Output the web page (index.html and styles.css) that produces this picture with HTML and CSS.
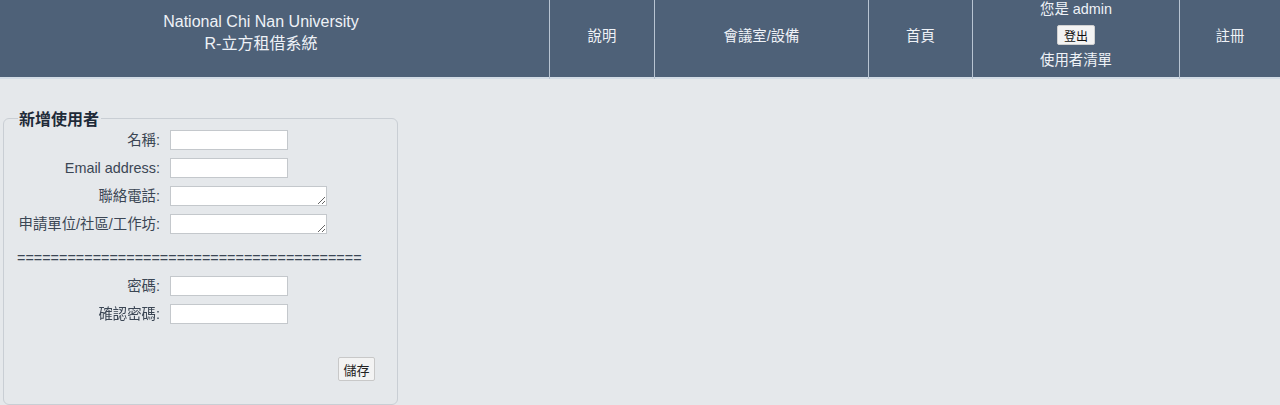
FILE: index.html
```html
<!DOCTYPE html>
<html lang="zh-Hant">
<head>
<meta charset="utf-8">
<title>R-立方租借系統</title>
<link rel="stylesheet" href="styles.css">
</head>
<body>
<header class="topbar">
  <div class="cell brand">National Chi Nan University<br>R-立方租借系統</div>
  <div class="cell">說明</div>
  <div class="cell">會議室/設備</div>
  <div class="cell">首頁</div>
  <div class="cell user">
    <span>您是 admin</span>
    <button class="logout" type="button">登出</button>
    <span>使用者清單</span>
  </div>
  <div class="cell">註冊</div>
</header>
<main class="content">
  <fieldset class="panel">
    <legend class="panel-title">新增使用者</legend>
    <div class="form-grid">
      <label class="lbl">名稱:</label><input class="txt" type="text">
      <label class="lbl">Email address:</label><input class="txt" type="text">
      <label class="lbl">聯絡電話:</label><textarea class="area"></textarea>
      <label class="lbl">申請單位/社區/工作坊:</label><textarea class="area"></textarea>
    </div>
    <div class="sep">=========================================</div>
    <div class="form-grid">
      <label class="lbl">密碼:</label><input class="txt" type="password">
      <label class="lbl">確認密碼:</label><input class="txt" type="password">
    </div>
    <div class="actions"><button class="save" type="button">儲存</button></div>
  </fieldset>
</main>
</body>
</html>
```
FILE: styles.css
```css
html, body {
  margin: 0;
  padding: 0;
}
body {
  background: #e5e8eb;
  font-family: "Liberation Sans", "Noto Sans CJK TC", sans-serif;
  font-size: 14.4px;
  color: #3b4654;
  height: 405px;
  overflow: hidden;
}
.topbar {
  display: grid;
  grid-template-columns: 549px 105px 214px 104px 207px 1fr;
  height: 77px;
  background: #4e6178;
  border-bottom: 2px solid #d3dce6;
  color: #eef2f7;
}
.cell {
  display: flex;
  align-items: center;
  justify-content: center;
  text-align: center;
  font-size: 14.4px;
  border-left: 1px solid #b8c4d2;
  padding-bottom: 11px;
}
.cell.brand {
  border-left: none;
  font-size: 16px;
  line-height: 22px;
  padding-bottom: 13px;
  padding-right: 27px;
}
.cell.user {
  flex-direction: column;
  line-height: 18px;
  padding-bottom: 10px;
}
.logout {
  margin: 7px 0 6px;
  height: 20px;
  width: 38px;
  padding: 0;
  font-family: inherit;
  font-size: 12px;
  color: #111;
  background: #f3f3f3;
  border: 1px solid #d0d0d0;
  border-radius: 2px;
}
.content {
  padding: 0 0 0 3px;
}
.panel {
  width: 395px;
  box-sizing: border-box;
  margin: 27px 0 0 0;
  padding: 0 14px 20px 14px;
  border: 1px solid #c9ced4;
  border-radius: 6px;
  height: 299px;
}
.panel-title {
  font-size: 16px;
  font-weight: bold;
  color: #1e2a38;
  padding: 0 2px 0 1px;
  margin-left: 0;
}
.form-grid {
  display: grid;
  grid-template-columns: 142px auto;
  column-gap: 10px;
  row-gap: 8px;
  align-items: center;
  justify-items: start;
}
.lbl {
  justify-self: end;
  line-height: 20px;
  white-space: nowrap;
}
.txt {
  box-sizing: border-box;
  width: 118px;
  height: 20px;
  border: 1px solid #c4c8cc;
  background: #fff;
  margin: 0;
}
.area {
  box-sizing: border-box;
  width: 157px;
  height: 20px;
  border: 1px solid #c4c8cc;
  background: #fff;
  margin: 0;
  resize: both;
}
.sep {
  margin: 16px 0 10px -1px;
  line-height: 16px;
  color: #3b4654;
}
.actions {
  display: flex;
  justify-content: flex-end;
  margin-top: 33px;
  padding-right: 8px;
}
.save {
  height: 24px;
  width: 37px;
  padding: 0;
  font-family: inherit;
  font-size: 13px;
  color: #222;
  background: #f3f3f3;
  border: 1px solid #c8c8c8;
  border-radius: 2px;
}
```
